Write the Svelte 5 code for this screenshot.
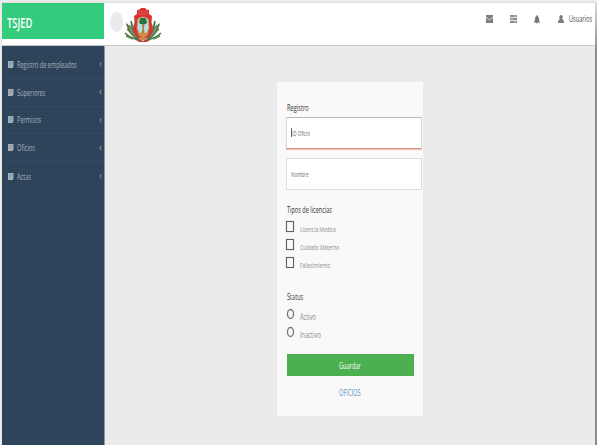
<script>
  const menu = [
    { label: 'Registro de empleados', width: 59.5 },
    { label: 'Superiores', width: 28.5 },
    { label: 'Permisos', width: 24.3 },
    { label: 'Oficios', width: 17.8 },
    { label: 'Actas', width: 14.3 }
  ];
  const licenses = [
    { label: 'Licencia Medica', width: 35.5 },
    { label: 'Cuidado Materno', width: 39.5 },
    { label: 'Fallecimiento', width: 30.5 }
  ];
  const statuses = [
    { label: 'Activo', width: 16 },
    { label: 'Inactivo', width: 21 }
  ];

  // Condenses a label horizontally to the requested width.
  function fit(node, width) {
    node.style.transform = `scaleX(${width / node.offsetWidth})`;
  }
</script>

{#snippet narrow(text, width)}
  <span class="narrow" style="width:{width}px"><span class="glyphs" use:fit={width}>{text}</span></span>
{/snippet}

<div class="page">
  <header>
    <div class="brand">{@render narrow('TSJED', 25.5)}</div>
    <div class="toggle"></div>
    <svg class="crest" width="38" height="38" viewBox="0 0 38 38">
      <path d="M17 35Q4 31 2 16L8 25L7 14L13 26V31ZM21 35Q34 31 36 16L30 25L31 14L25 26V31Z" fill="#8fa580" />
      <g fill="none" stroke="#477044" stroke-width="1.5">
        <path d="M17 35Q7 31 3 18M14 34Q5 31 1 27M15 33Q8 25 7 15M21 35Q31 31 35 18M24 34Q33 31 37 27M23 33Q30 25 31 15" />
        <path d="M12 32L3 23M12 30L5 19M26 32L35 23M26 30L33 19M9 33L2 30M29 33L36 30" stroke="#5d8250" stroke-width="1.4" />
      </g>
      <path d="M13 4Q16 4 17 2H21Q22 4 25 4V8L28 10L27.500 16L29 24L26 30L19 34L12 30L9 24L10.500 16L10 10L13 8Z" fill="#d83232" />
      <path d="M14 5L19 6L24 5M14 8H24" fill="none" stroke="#e5564b" />
      <path d="M14 13Q19 9 24 13L25 22Q24 28 19 30Q14 28 13 22Z" fill="#b9dde3" stroke="#c5a06a" />
      <path d="M16 18L15 16L16.500 12H21.500L23 16L22 18Z" fill="#27743d" />
      <path d="M18 18H20.500L20 22L20.500 27H17.500L18.500 23Z" fill="#a28439" />
      <path d="M13 26Q19 28 25 26L23 30L20.500 31L21 34H17L17.500 31L15 30Z" fill="#ce9047" />
      <path d="M12 34L16 33L19 35L22 33L26 34L23 36H15Z" fill="#bd4436" />
    </svg>
    <nav class="tools">
      <svg width="7" height="8" viewBox="0 0 7 8"><path d="M0 0H7V8H0Z" fill="#7c7c7c" /><path d="M0 2L3.500 5L7 2" fill="none" stroke="#ddd" stroke-width="1" /></svg>
      <svg width="7" height="8" viewBox="0 0 7 8"><path d="M0 0H7V2.200H0ZM0 2.900H7V5.100H0ZM0 5.800H7V8H0Z" fill="#8c8c8c" /><path d="M3.500 1H6.500M1 4H3M4 7H6" stroke="#ddd" stroke-width=".7" /></svg>
      <svg width="6" height="9" viewBox="0 0 6 9"><path d="M2.500 0H3.500V1Q5 1.500 5 4Q5 6 6 7V7.500H4Q3 9.500 2 7.500H0V7Q1 6 1 4Q1 1.500 2.500 1Z" fill="#777" /></svg>
      <svg width="6" height="8" viewBox="0 0 6 8"><path d="M3 0Q4.700 0 4.700 2Q4.700 3.500 4 4.200Q6 4.500 6 8H0Q0 4.500 2 4.200Q1.300 3.500 1.300 2Q1.300 0 3 0Z" fill="#7c7c7c" /></svg>
      <div class="user">{@render narrow('Usuarios', 23)}</div>
    </nav>
  </header>

  <div class="body">
    <aside>
      {#each menu as item}
        <div class="item">
          <svg width="6" height="7" viewBox="0 0 6 7"><path d="M0 0H5.500V5L4.500 7H0Z" fill="#a3afb9" /><path d="M1 1.500H4.500M1 3H4.500M1 4.500H3" stroke="#8291a0" stroke-width=".6" /></svg>
          {@render narrow(item.label, item.width)}
          <svg class="chevron" width="3" height="6" viewBox="0 0 3 6"><path d="M2.400 1L.8 3.200L2.400 5.400" fill="none" stroke="#9aa8b3" stroke-width=".9" /></svg>
        </div>
      {/each}
    </aside>
    <main>
      <form onsubmit={(e) => e.preventDefault()}>
        <div class="heading">{@render narrow('Registro', 21.5)}</div>
        <div class="field active"><i></i>{@render narrow('ID Oficio', 18)}</div>
        <div class="field">{@render narrow('Nombre', 17.5)}</div>
        <div class="heading types">{@render narrow('Tipos de licencias', 45)}</div>
        {#each licenses as item}
          <label class="option"><b class="check"></b>{@render narrow(item.label, item.width)}</label>
        {/each}
        <div class="heading status">{@render narrow('Status', 16.5)}</div>
        {#each statuses as item}
          <label class="option radio"><b class="dot"></b>{@render narrow(item.label, item.width)}</label>
        {/each}
        <button>{@render narrow('Guardar', 22)}</button>
        <div class="link">{@render narrow('OFICIOS', 21.5)}</div>
      </form>
    </main>
  </div>
  <div class="edge"></div>
</div>

<style>
  :global(body) { margin: 0; }
  * { box-sizing: border-box; }
  .page {
    position: relative;
    width: 597px;
    height: 445px;
    padding: 3px 2px 0;
    overflow: hidden;
    background: #ebebeb;
    font-family: "Open Sans", sans-serif;
    display: flex;
    flex-direction: column;
  }
  .narrow { display: inline-block; flex: none; white-space: nowrap; text-align: left; }
  .glyphs { display: inline-block; transform-origin: 0 50%; }
  header {
    height: 43px;
    flex: none;
    display: flex;
    background: #fff;
    border-bottom: 1px solid #c6c6c6;
    box-shadow: 0 -1px #dfdfdf;
  }
  .brand {
    width: 102px;
    height: 36px;
    padding-left: 5px;
    background: #33cc7d;
    color: #fff;
    font-size: 14px;
    font-weight: 600;
    line-height: 39px;
  }
  .toggle { width: 13px; height: 20px; margin: 9px 0 0 6px; border-radius: 50%; background: #ebebeb; }
  .crest { margin: 3px 0 0 1px; }
  .tools { margin-left: auto; padding: 0 3px 10px 0; display: flex; align-items: center; }
  .tools svg { margin-right: 17px; }
  .tools svg:nth-child(3) { margin-right: 18px; }
  .tools svg:nth-child(4) { margin-right: 5px; }
  .user { font-size: 9.5px; line-height: 12px; color: #484848; }
  .body { flex: 1; display: flex; min-height: 0; }
  aside {
    width: 103px;
    padding-top: 5px;
    background: #2d445a;
    border-right: 1px solid #8c9ba6;
  }
  .item {
    height: 27.8px;
    padding: 0 2px 0 5.5px;
    display: flex;
    align-items: center;
    border-bottom: 1px solid #344b60;
    color: #a5b1bb;
    font-size: 9.5px;
    line-height: 12px;
  }
  .item .narrow { padding-top: 1px; }
  .item:last-child { border-bottom: 0; }
  .item > svg:first-child { margin-right: 3px; }
  .item .chevron { margin-left: auto; }
  main { flex: 1; }
  form {
    width: 146px;
    height: 334px;
    margin: 36px 0 0 172px;
    padding: 19px 0 0 9px;
    background: #f9f9f9;
    display: flex;
    flex-direction: column;
  }
  .heading { height: 12px; padding-left: .5px; font-size: 9.5px; line-height: 13px; color: #333; }
  .field {
    width: 136px;
    height: 32px;
    flex: none;
    margin-top: 4px;
    padding: 0 0 1px 4px;
    display: flex;
    align-items: center;
    background: #fff;
    border: 1px solid #ddd;
    color: #6c6c6c;
    font-size: 7.5px;
    line-height: 10px;
  }
  .active { border-top-color: #bbb; border-bottom-color: #d68f7e; box-shadow: 0 1px 1px #f0c6bb; }
  .active i { width: 1px; height: 9px; margin-right: -.5px; background: #666; }
  .active + .field { margin-top: 9px; }
  .types { margin: 13px 0 6px; }
  .option { height: 18px; flex: none; display: flex; align-items: flex-start; color: #8c8c8c; font-size: 7.7px; line-height: 10px; }
  .option .narrow { margin-top: 3px; }
  .check { width: 8px; height: 11px; margin-right: 6px; border: 1.5px solid #606060; box-shadow: 0 0 .7px #666, inset 0 0 .7px #666; }
  .status { margin: 15px 0 7px; }
  .radio { font-size: 8.5px; }
  .dot { width: 7px; height: 10px; margin: 0 6px 0 1px; border: 1.4px solid #686868; border-radius: 50%; box-shadow: 0 0 .7px #666, inset 0 0 .7px #666; }
  button {
    width: 127px;
    height: 22px;
    flex: none;
    margin: 9px 0 0 .5px;
    padding: 1px 0 0;
    border: 0;
    background: #4caf50;
    color: #fff;
    font-family: inherit;
    font-size: 9.5px;
    line-height: 22px;
  }
  .link { width: 127px; margin-top: 11px; text-align: center; color: #5590c5; font-size: 9.5px; line-height: 12px; }
  .edge {
    position: absolute;
    top: 3px;
    right: 0;
    width: 2px;
    height: 442px;
    background: linear-gradient(#d8d8d8, #8b8b8b 50px);
  }
</style>
